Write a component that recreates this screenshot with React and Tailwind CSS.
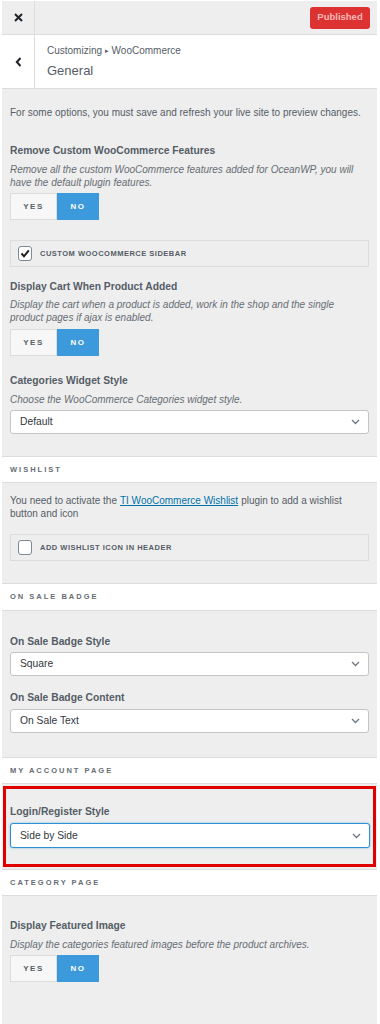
const Toggle = () => (
  <div className="flex h-[27px] text-[8px] font-bold tracking-[1.5px]">
    <div className="w-[47px] border border-[#dddddd] bg-[#f7f7f7] text-[#555d66] flex items-center justify-center">
      YES
    </div>
    <div className="w-[42px] bg-[#3c99dc] text-white flex items-center justify-center">NO</div>
  </div>
);

const Check = ({ label, checked = false }) => (
  <div className="h-[27px] border border-[#dddddd] flex items-center pl-[7px] gap-[8px]">
    <div className="w-[14px] h-[15px] rounded-[3px] border border-[#7e8993] bg-white flex items-center justify-center">
      {checked && (
        <svg width="10" height="9" viewBox="0 0 10 9">
          <path d="M1.5 4.5l2.5 2.8 4.8-6" fill="none" stroke="#1e1e1e" strokeWidth="2" />
        </svg>
      )}
    </div>
    <span className="text-[7.5px] font-bold tracking-[0.5px] text-[#555d66]">{label}</span>
  </div>
);

const Select = ({ value, focused = false }) => (
  <div
    className={
      focused
        ? "h-[25px] border border-[#2d8fd6] rounded-[3px] bg-white pl-[9px] pr-[8px] flex items-center justify-between shadow-[0_0_2px_rgba(30,140,190,0.6)]"
        : "h-[24px] border border-[#c3c4c7] rounded-[3px] bg-white pl-[9px] pr-[8px] flex items-center justify-between"
    }
  >
    <span className="text-[10.3px] text-[#32373c]">{value}</span>
    <svg width="9" height="6" viewBox="0 0 9 6">
      <path d="M1 1l3.5 3.5L8 1" fill="none" stroke="#6c7781" strokeWidth="1.3" />
    </svg>
  </div>
);

const Heading = ({ children, className = "" }) => (
  <div className={"text-[10.3px] leading-[18px] font-bold text-[#555d66] " + className}>{children}</div>
);

const Desc = ({ children, className = "" }) => (
  <div className={"text-[10px] leading-[13px] italic text-[#666d74] " + className}>{children}</div>
);

const SectionTitle = ({ children, className = "h-[27px]" }) => (
  <div
    className={
      "bg-white border-y border-[#dddddd] flex items-center pl-[8px] text-[7.5px] font-bold tracking-[2px] text-[#666d74] " +
      className
    }
  >
    {children}
  </div>
);

export default function App() {
  return (
    <div className="w-[380px] min-h-[1024px] bg-white pt-[1px] pl-[2px] pr-[3px] font-['Liberation_Sans',Arial,sans-serif]">
      <div className="bg-[#eeeeee] min-h-[1023px] flex flex-col">
        {/* top bar */}
        <div className="h-[34px] flex items-center border-b border-[#dddddd]">
          <div className="w-[33px] h-full border-r border-[#dddddd] flex items-center justify-center">
            <svg width="9" height="9" viewBox="0 0 9 9">
              <path d="M1 1l7 7M8 1L1 8" stroke="#1d2327" strokeWidth="2" />
            </svg>
          </div>
          <div className="ml-auto mr-[7px] h-[22px] w-[60px] rounded-[3px] bg-[#dc3232] flex items-center justify-center text-[9.5px] font-bold text-[#f6b8b8]">
            Published
          </div>
        </div>

        {/* header */}
        <div className="h-[54px] bg-white border-b border-[#dddddd] flex">
          <div className="w-[33px] border-r border-[#dddddd] flex items-center justify-center">
            <svg width="7" height="10" viewBox="0 0 7 10">
              <path d="M5.5 1L1.8 5l3.7 4" fill="none" stroke="#1d2327" strokeWidth="2" />
            </svg>
          </div>
          <div className="pl-[12px] pt-[9px]">
            <div className="text-[10px] leading-[14px] text-[#555d66]">
              Customizing <span className="text-[7px] align-middle">▸</span> WooCommerce
            </div>
            <div className="mt-[5px] text-[13px] leading-[16px] text-[#555d66]">General</div>
          </div>
        </div>

        {/* general options */}
        <div className="px-[8px] pt-[16px] pb-[22px]">
          <div className="text-[10px] leading-[16px] text-[#555d66]">
            For some options, you must save and refresh your live site to preview changes.
          </div>
          <Heading className="mt-[21px]">Remove Custom WooCommerce Features</Heading>
          <Desc className="mt-[3px]">
            Remove all the custom WooCommerce features added for OceanWP, you will have the default plugin features.
          </Desc>
          <div className="mt-[4px]">
            <Toggle />
          </div>
          <div className="mt-[20px]">
            <Check label="CUSTOM WOOCOMMERCE SIDEBAR" checked />
          </div>
          <Heading className="mt-[11px]">Display Cart When Product Added</Heading>
          <Desc className="mt-[2px]">
            Display the cart when a product is added, work in the shop and the single product pages if ajax is enabled.
          </Desc>
          <div className="mt-[5px]">
            <Toggle />
          </div>
          <Heading className="mt-[16px]">Categories Widget Style</Heading>
          <Desc className="mt-[3px]">Choose the WooCommerce Categories widget style.</Desc>
          <div className="mt-[4px]">
            <Select value="Default" />
          </div>
        </div>

        <SectionTitle>WISHLIST</SectionTitle>
        <div className="px-[8px] pt-[11px] pb-[22px]">
          <div className="text-[10px] leading-[13px] text-[#555d66]">
            <div className="flex gap-[3px]">
              <span>You need to activate the</span>
              <span className="text-[#0073aa] underline">TI WooCommerce Wishlist</span>
              <span>plugin to add a wishlist</span>
            </div>
            <div>button and icon</div>
          </div>
          <div className="mt-[14px]">
            <Check label="ADD WISHLIST ICON IN HEADER" />
          </div>
        </div>

        <SectionTitle className="h-[28px]">ON SALE BADGE</SectionTitle>
        <div className="px-[8px] pt-[22px] pb-[24px]">
          <Heading>On Sale Badge Style</Heading>
          <div className="mt-[1px]">
            <Select value="Square" />
          </div>
          <Heading className="mt-[13px]">On Sale Badge Content</Heading>
          <div className="mt-[2px]">
            <Select value="On Sale Text" />
          </div>
        </div>

        <SectionTitle>MY ACCOUNT PAGE</SectionTitle>
        <div className="px-[1px] py-[2px]">
          <div className="border-[3px] border-[#e00000] pl-[4px] pr-[3px] pt-[14px] pb-[16px]">
            <Heading>Login/Register Style</Heading>
            <div className="mt-[2px]">
              <Select value="Side by Side" focused />
            </div>
          </div>
        </div>

        <SectionTitle>CATEGORY PAGE</SectionTitle>
        <div className="px-[8px] pt-[21px] pb-[40px]">
          <Heading>Display Featured Image</Heading>
          <Desc className="mt-[3px]">Display the categories featured images before the product archives.</Desc>
          <div className="mt-[4px]">
            <Toggle />
          </div>
        </div>
      </div>
    </div>
  );
}
